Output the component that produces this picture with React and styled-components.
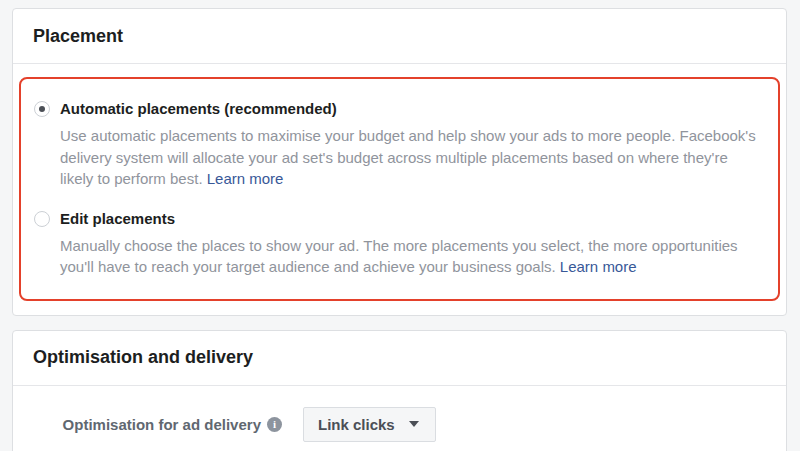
import React from "react";
import styled, { createGlobalStyle } from "styled-components";

const Global = createGlobalStyle`
  body {
    margin: 0;
    background: #f5f6f7;
    font-family: "Liberation Sans", Arial, sans-serif;
  }
`;

const Page = styled.div`
  padding: 8px 13px 0 12px;
  display: flex;
  flex-direction: column;
  gap: 14px;
  height: 451px;
  overflow: hidden;
  box-sizing: border-box;
`;

const Card = styled.div`
  background: #fff;
  border: 1px solid #dddfe2;
  border-radius: 4px;
`;

const CardHeader = styled.div`
  height: 54px;
  padding: 0 20px;
  display: flex;
  align-items: center;
  border-bottom: 1px solid #e5e6e9;
  font-size: 18px;
  font-weight: bold;
  color: #1c1e21;
`;

const CardBody = styled.div`
  padding: 13px 6px 14px 6px;
`;

const Highlight = styled.div`
  border: 2px solid #e4412b;
  border-radius: 8px;
  padding: 21px 14px 21px 13px;
  display: flex;
  flex-direction: column;
  gap: 20px;
`;

const Option = styled.div`
  display: grid;
  grid-template-columns: 17px 1fr;
  column-gap: 9px;
  row-gap: 7px;
`;

const Radio = styled.span`
  width: 16px;
  height: 16px;
  border-radius: 50%;
  border: 1px solid #ccd0d5;
  background: #fff;
  box-sizing: border-box;
  display: flex;
  align-items: center;
  justify-content: center;
  margin-top: 1px;
  &::after {
    content: "";
    width: 6px;
    height: 6px;
    border-radius: 50%;
    background: ${(p) => (p.checked ? "#4b4f56" : "transparent")};
  }
`;

const Title = styled.div`
  font-size: 15px;
  font-weight: bold;
  color: #1c1e21;
  line-height: 18px;
`;

const Desc = styled.div`
  grid-column: 2;
  font-size: 15px;
  line-height: 21.5px;
  color: #90949c;
`;

const Link = styled.a`
  color: #385898;
  text-decoration: none;
`;

const Row = styled.div`
  display: flex;
  align-items: center;
  padding: 21px 0 12px 0;
`;

const Label = styled.div`
  width: 269px;
  text-align: right;
  font-size: 15px;
  font-weight: bold;
  color: #606770;
  display: flex;
  justify-content: flex-end;
  align-items: center;
  gap: 6px;
`;

const Info = styled.span`
  width: 15px;
  height: 15px;
  border-radius: 50%;
  background: #8d949e;
  color: #fff;
  font-size: 11px;
  font-weight: bold;
  font-family: "Liberation Serif", serif;
  display: inline-flex;
  align-items: center;
  justify-content: center;
`;

const Select = styled.div`
  margin-left: 21px;
  height: 33px;
  padding: 0 16px 0 14px;
  background: #f5f6f7;
  border: 1px solid #dadde1;
  border-radius: 2px;
  display: flex;
  align-items: center;
  gap: 14px;
  font-size: 15px;
  font-weight: bold;
  color: #4b4f56;
`;

const Caret = styled.span`
  width: 0;
  height: 0;
  border-left: 5px solid transparent;
  border-right: 5px solid transparent;
  border-top: 6px solid #4b4f56;
`;

export default function App() {
  return (
    <>
      <Global />
      <Page>
        <Card>
          <CardHeader>Placement</CardHeader>
          <CardBody>
            <Highlight>
              <Option>
                <Radio checked />
                <Title>Automatic placements (recommended)</Title>
                <Desc>
                  Use automatic placements to maximise your budget and help show your ads to more
                  people. Facebook's delivery system will allocate your ad set's budget across
                  multiple placements based on where they're likely to perform best.{" "}
                  <Link href="#">Learn more</Link>
                </Desc>
              </Option>
              <Option>
                <Radio />
                <Title>Edit placements</Title>
                <Desc>
                  Manually choose the places to show your ad. The more placements you select, the
                  more opportunities you'll have to reach your target audience and achieve your
                  business goals. <Link href="#">Learn more</Link>
                </Desc>
              </Option>
            </Highlight>
          </CardBody>
        </Card>
        <Card>
          <CardHeader>Optimisation and delivery</CardHeader>
          <Row>
            <Label>
              Optimisation for ad delivery <Info>i</Info>
            </Label>
            <Select>
              Link clicks <Caret />
            </Select>
          </Row>
        </Card>
      </Page>
    </>
  );
}
